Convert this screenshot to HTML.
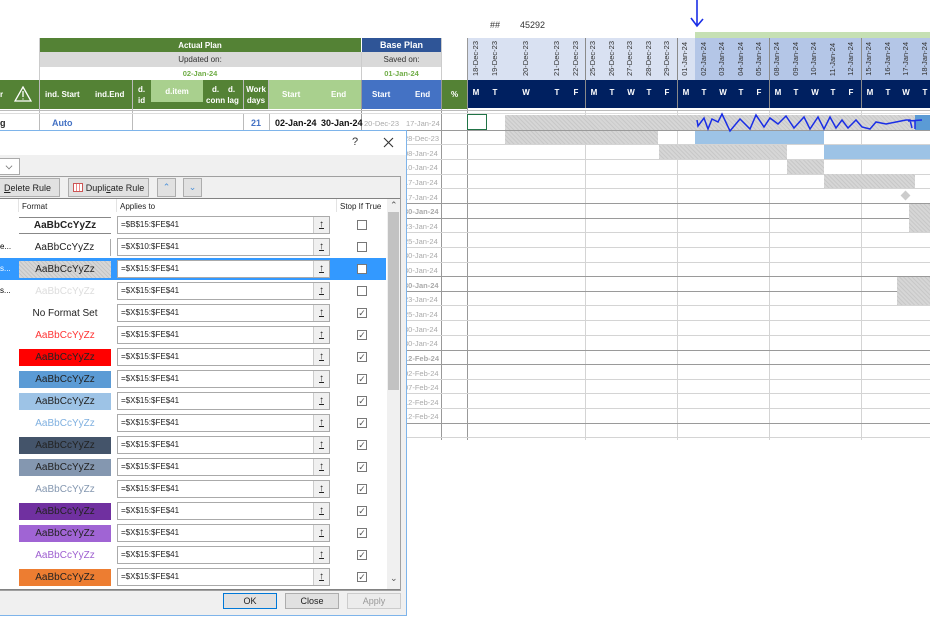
<!DOCTYPE html>
<html><head><meta charset="utf-8">
<style>
*{margin:0;padding:0;box-sizing:border-box}
body{width:930px;height:620px;overflow:hidden;background:#fff;font-family:"Liberation Sans",sans-serif;position:relative}
.a{position:absolute}
.c{display:flex;align-items:center;justify-content:center;text-align:center}
.hdr{color:#fff;font-weight:bold;font-size:8px}
.dt{position:absolute;top:40px;height:36px;width:10px;font-size:7.5px;color:#333}
.dt span{position:absolute;left:0;bottom:0;writing-mode:vertical-rl;transform:rotate(180deg);white-space:nowrap;line-height:10px}
.dy{position:absolute;top:88px;width:14px;margin-left:-7px;text-align:center;color:#fff;font-weight:bold;font-size:8px}
.hl{position:absolute;left:406px;width:524px;height:1px;background:#d4d4d4}
.hd{position:absolute;left:406px;width:524px;height:1px;background:#9a9a9a}
.vl{position:absolute;top:110px;height:330px;width:1px;background:#d4d4d4}
.hat{position:absolute;background-color:#d6d6d6;background-image:repeating-linear-gradient(45deg,#c8c8c8 0 1px,transparent 1px 3px)}
.rd{position:absolute;left:404px;width:37px;font-size:7.5px;color:#aaa;white-space:nowrap;overflow:hidden}
.rw{position:absolute;left:0;width:386px;height:22px}
.fm{position:absolute;left:19px;top:3px;width:92px;height:17px;font-size:10px;color:#222;display:flex;align-items:center;justify-content:center}
.ap{position:absolute;left:117px;top:2px;width:213px;height:18px;border:1px solid #aaa;background:#fff;font-size:8px;padding-left:3px;line-height:16px;color:#222}
.ap b{position:absolute;right:0;top:0;width:16px;height:16px;border-left:1px solid #ccc;background:#f0f0f0;font-size:10px;text-align:center;line-height:15px;text-decoration:underline}
.cb{position:absolute;left:357px;top:6px;width:10px;height:10px;border:1px solid #777;background:#fff;font-size:9px;line-height:8px;text-align:center;color:#555}
.btn{position:absolute;border:1px solid #adadad;background:#e1e1e1;font-size:9px;color:#222;display:flex;align-items:center;justify-content:center}
</style></head><body>

<div class="a" style="left:490px;top:20px;font-size:9px;color:#333">##</div>
<div class="a" style="left:520px;top:20px;font-size:9px;color:#333">45292</div>
<svg class="a" style="left:688px;top:0" width="20" height="30"><path d="M9 0 L9 26 M3 18 L9 26 L15 19" stroke="#1a2ee6" stroke-width="1.6" fill="none"/></svg>
<div class="a" style="left:695px;top:32px;width:235px;height:6px;background:#c6e0b4"></div>

<div class="a c hdr" style="left:39px;top:38px;width:322px;height:14px;background:#548235">Actual Plan</div>
<div class="a c hdr" style="left:362px;top:38px;width:79px;height:14px;background:#2f5597;font-size:9px">Base Plan</div>
<div class="a c" style="left:39px;top:52px;width:322px;height:15px;background:#d9d9d9;font-size:8px;color:#333">Updated on:</div>
<div class="a c" style="left:362px;top:52px;width:79px;height:15px;background:#d9d9d9;font-size:8px;color:#333">Saved on:</div>
<div class="a c" style="left:39px;top:67px;width:322px;height:13px;font-size:7.5px;color:#70ad47;font-weight:bold">02-Jan-24</div>
<div class="a c" style="left:362px;top:67px;width:79px;height:13px;font-size:7.5px;color:#70ad47;font-weight:bold">01-Jan-24</div>
<div class="a" style="left:39px;top:38px;width:1px;height:42px;background:#ccc"></div>
<div class="a" style="left:441px;top:38px;width:1px;height:42px;background:#ccc"></div>
<div class="a" style="left:361px;top:52px;width:1px;height:28px;background:#ccc"></div>

<div class="a" style="left:0;top:80px;width:467px;height:29px;background:#548235"></div>
<div class="a hdr" style="left:0;top:90px">r</div>
<svg class="a" style="left:14px;top:86px" width="18" height="16"><path d="M9 1 L17 15 L1 15 Z M9 5 L9 11 M9 12.5 L9 13.5" stroke="#fff" stroke-width="1.3" fill="none"/></svg>
<div class="a" style="left:39px;top:80px;width:1px;height:50px;background:#bbb"></div>
<div class="a hdr" style="left:45px;top:90px">ind. Start</div>
<div class="a hdr" style="left:95px;top:90px">ind.End</div>
<div class="a" style="left:132px;top:80px;width:1px;height:50px;background:#bbb"></div>
<div class="a hdr" style="left:138px;top:84px;line-height:11px">d.<br>id</div>
<div class="a c hdr" style="left:151px;top:80px;width:52px;height:22px;background:#a9d08e">d.item</div>
<div class="a hdr" style="left:206px;top:84px;line-height:11px;text-align:center">&nbsp;d.&nbsp;&nbsp;&nbsp;&nbsp;d.<br>conn lag</div>
<div class="a c hdr" style="left:243px;top:80px;width:26px;height:29px;line-height:11px;font-size:8px;border-left:1px solid #bbb;border-right:1px solid #bbb">Work<br>days</div>
<div class="a" style="left:269px;top:80px;width:92px;height:29px;background:#a9d08e"></div>
<div class="a hdr" style="left:282px;top:90px">Start</div>
<div class="a hdr" style="left:331px;top:90px">End</div>
<div class="a" style="left:362px;top:80px;width:79px;height:29px;background:#4472c4"></div>
<div class="a hdr" style="left:372px;top:90px">Start</div>
<div class="a hdr" style="left:415px;top:90px">End</div>
<div class="a hdr" style="left:451px;top:90px">%</div>
<div class="a" style="left:361px;top:80px;width:1px;height:50px;background:#999"></div>
<div class="a" style="left:441px;top:80px;width:1px;height:360px;background:#999"></div>

<div class="a" style="left:467px;top:38px;width:228px;height:42px;background:#d9e1f2"></div>
<div class="a" style="left:695px;top:38px;width:235px;height:42px;background:#b4c6e7"></div>
<div class="a" style="left:467px;top:80px;width:463px;height:28px;background:#002060"></div>
<div class="a" style="left:467px;top:38px;width:1px;height:402px;background:#999"></div>

<div class="dt" style="left:471px"><span>18-Dec-23</span></div>
<div class="dt" style="left:490px"><span>19-Dec-23</span></div>
<div class="dt" style="left:521px"><span>20-Dec-23</span></div>
<div class="dt" style="left:552px"><span>21-Dec-23</span></div>
<div class="dt" style="left:571px"><span>22-Dec-23</span></div>
<div class="dt" style="left:588px"><span>25-Dec-23</span></div>
<div class="dt" style="left:607px"><span>26-Dec-23</span></div>
<div class="dt" style="left:625px"><span>27-Dec-23</span></div>
<div class="dt" style="left:644px"><span>28-Dec-23</span></div>
<div class="dt" style="left:662px"><span>29-Dec-23</span></div>
<div class="dt" style="left:680px"><span>01-Jan-24</span></div>
<div class="dt" style="left:699px"><span>02-Jan-24</span></div>
<div class="dt" style="left:717px"><span>03-Jan-24</span></div>
<div class="dt" style="left:736px"><span>04-Jan-24</span></div>
<div class="dt" style="left:754px"><span>05-Jan-24</span></div>
<div class="dt" style="left:772px"><span>08-Jan-24</span></div>
<div class="dt" style="left:791px"><span>09-Jan-24</span></div>
<div class="dt" style="left:809px"><span>10-Jan-24</span></div>
<div class="dt" style="left:828px"><span>11-Jan-24</span></div>
<div class="dt" style="left:846px"><span>12-Jan-24</span></div>
<div class="dt" style="left:864px"><span>15-Jan-24</span></div>
<div class="dt" style="left:883px"><span>16-Jan-24</span></div>
<div class="dt" style="left:901px"><span>17-Jan-24</span></div>
<div class="dt" style="left:920px"><span>18-Jan-24</span></div>

<div class="dy" style="left:476px">M</div><div class="dy" style="left:495px">T</div><div class="dy" style="left:526px">W</div><div class="dy" style="left:557px">T</div><div class="dy" style="left:576px">F</div>
<div class="dy" style="left:594px">M</div><div class="dy" style="left:612px">T</div><div class="dy" style="left:631px">W</div><div class="dy" style="left:649px">T</div><div class="dy" style="left:667px">F</div>
<div class="dy" style="left:686px">M</div><div class="dy" style="left:704px">T</div><div class="dy" style="left:723px">W</div><div class="dy" style="left:741px">T</div><div class="dy" style="left:759px">F</div>
<div class="dy" style="left:778px">M</div><div class="dy" style="left:796px">T</div><div class="dy" style="left:815px">W</div><div class="dy" style="left:833px">T</div><div class="dy" style="left:851px">F</div>
<div class="dy" style="left:870px">M</div><div class="dy" style="left:888px">T</div><div class="dy" style="left:906px">W</div><div class="dy" style="left:925px">T</div>

<div class="a" style="left:585px;top:38px;width:1px;height:70px;background:#8a8a8a"></div>
<div class="a" style="left:677px;top:38px;width:1px;height:70px;background:#8a8a8a"></div>
<div class="a" style="left:769px;top:38px;width:1px;height:70px;background:#8a8a8a"></div>
<div class="a" style="left:861px;top:38px;width:1px;height:70px;background:#8a8a8a"></div>
<div class="vl" style="left:585px"></div><div class="vl" style="left:677px"></div><div class="vl" style="left:769px"></div><div class="vl" style="left:861px"></div>

<div class="a" style="left:0;top:110px;width:930px;height:1px;background:#bbb"></div>
<div class="a" style="left:0;top:113px;width:930px;height:1px;background:#ddd"></div>
<div class="hd" style="top:130px"></div>
<div class="hl" style="top:144px"></div><div class="hl" style="top:159px"></div><div class="hl" style="top:174px"></div>
<div class="hl" style="top:188px"></div><div class="hd" style="top:203px"></div><div class="hd" style="top:218px"></div>
<div class="hl" style="top:232px"></div><div class="hl" style="top:247px"></div><div class="hl" style="top:262px"></div>
<div class="hd" style="top:276px"></div><div class="hd" style="top:291px"></div><div class="hl" style="top:305px"></div>
<div class="hl" style="top:320px"></div><div class="hl" style="top:335px"></div><div class="hd" style="top:350px"></div>
<div class="hd" style="top:364px"></div><div class="hl" style="top:379px"></div><div class="hl" style="top:393px"></div>
<div class="hl" style="top:408px"></div><div class="hd" style="top:423px"></div><div class="hl" style="top:437px"></div>

<div class="a" style="left:0;top:118px;font-size:9px;font-weight:bold;color:#222">g</div>
<div class="a" style="left:52px;top:118px;font-size:9px;font-weight:bold;color:#4472c4">Auto</div>
<div class="a" style="left:243px;top:114px;width:1px;height:16px;background:#bbb"></div>
<div class="a" style="left:269px;top:114px;width:1px;height:16px;background:#bbb"></div>
<div class="a" style="left:251px;top:118px;font-size:9px;font-weight:bold;color:#4472c4">21</div>
<div class="a" style="left:275px;top:118px;font-size:9px;font-weight:bold;color:#111">02-Jan-24</div>
<div class="a" style="left:321px;top:118px;font-size:9px;font-weight:bold;color:#111">30-Jan-24</div>
<div class="a" style="left:364px;top:119px;font-size:7.5px;color:#aaa">20-Dec-23</div>
<div class="a" style="left:406px;top:119px;font-size:7.5px;color:#aaa">17-Jan-24</div>

<div class="rd" style="top:134px">28-Dec-23</div>
<div class="rd" style="top:149px">08-Jan-24</div>
<div class="rd" style="top:163px">10-Jan-24</div>
<div class="rd" style="top:178px">17-Jan-24</div>
<div class="rd" style="top:193px">17-Jan-24</div>
<div class="rd" style="top:207px;font-weight:bold">30-Jan-24</div>
<div class="rd" style="top:222px">23-Jan-24</div>
<div class="rd" style="top:237px">25-Jan-24</div>
<div class="rd" style="top:251px">30-Jan-24</div>
<div class="rd" style="top:266px">30-Jan-24</div>
<div class="rd" style="top:281px;font-weight:bold">30-Jan-24</div>
<div class="rd" style="top:295px">23-Jan-24</div>
<div class="rd" style="top:310px">25-Jan-24</div>
<div class="rd" style="top:325px">30-Jan-24</div>
<div class="rd" style="top:339px">30-Jan-24</div>
<div class="rd" style="top:354px;font-weight:bold">12-Feb-24</div>
<div class="rd" style="top:369px">02-Feb-24</div>
<div class="rd" style="top:383px">07-Feb-24</div>
<div class="rd" style="top:398px">12-Feb-24</div>
<div class="rd" style="top:412px">12-Feb-24</div>

<div class="hat" style="left:505px;top:115px;width:410px;height:15px"></div>
<div class="a" style="left:915px;top:115px;width:15px;height:15px;background:#5b9bd5"></div>
<div class="a" style="left:467px;top:114px;width:20px;height:16px;border:1.5px solid #217346"></div>
<div class="hat" style="left:505px;top:131px;width:153px;height:13px"></div>
<div class="a" style="left:695px;top:131px;width:129px;height:13px;background:#9dc3e6"></div>
<div class="hat" style="left:659px;top:145px;width:128px;height:14px"></div>
<div class="a" style="left:824px;top:145px;width:106px;height:14px;background:#9dc3e6"></div>
<div class="hat" style="left:787px;top:160px;width:37px;height:14px"></div>
<div class="hat" style="left:824px;top:174px;width:91px;height:14px"></div>
<div class="a" style="left:902px;top:192px;width:7px;height:7px;background:#ccc;transform:rotate(45deg)"></div>
<div class="hat" style="left:909px;top:204px;width:21px;height:28px"></div>
<div class="hat" style="left:897px;top:277px;width:33px;height:28px"></div>
<svg class="a" style="left:690px;top:108px" width="240" height="30"><path d="M7 12 L8 18 L14 10 L18 21 L22 11 L28 14 L32 6 L40 23 L50 11 L60 21 L66 7 L74 19 L80 10 L88 16 L96 8 L104 20 L114 9 L120 21 L128 9 L134 21 L140 9 L146 20 L152 12 L158 20 L166 12 L172 19 L180 21 L186 14 L196 16 L206 14 L216 12 L220 12 L222 20 M218 13 L232 12 M225 12 L225 21" stroke="#1a2ee6" stroke-width="1.5" fill="none"/></svg>

<!-- DIALOG -->
<div class="a" style="left:0;top:130px;width:407px;height:486px;background:#f0f0f0;border:1px solid #7eb4ea;border-left:none"></div>
<div class="a" style="left:0;top:131px;width:406px;height:24px;background:#fff"></div>
<div class="a" style="left:352px;top:136px;font-size:11px;color:#333">?</div>
<svg class="a" style="left:383px;top:137px" width="11" height="11"><path d="M1 1 L10 10 M10 1 L1 10" stroke="#333" stroke-width="1.1"/></svg>
<div class="a" style="left:0;top:158px;width:20px;height:17px;border:1px solid #aaa;border-left:none;background:#fff"></div>
<div class="a" style="left:6px;top:163px;width:6px;height:6px;border-right:1px solid #777;border-bottom:1px solid #777;transform:rotate(45deg) scale(.8)"></div>
<div class="a" style="left:0;top:176px;width:401px;height:415px;border:1px solid #a0a0a0;border-left:none"></div>
<div class="btn" style="left:-1px;top:178px;width:61px;height:19px;justify-content:flex-start;padding-left:4px"><u>D</u>elete Rule</div>
<div class="btn" style="left:68px;top:178px;width:81px;height:19px"><span style="display:inline-block;width:10px;height:9px;border:1px solid #c55;background:repeating-linear-gradient(90deg,#fff 0 2px,#e88 2px 3px);margin-right:3px"></span>Dupli<u>c</u>ate Rule</div>
<div class="btn" style="left:157px;top:178px;width:19px;height:19px;color:#4a90d9;font-size:9px">&#8963;</div>
<div class="btn" style="left:183px;top:178px;width:19px;height:19px;color:#4a90d9;font-size:9px">&#8964;</div>

<div class="a" style="left:0;top:198px;width:400px;height:392px;background:#fff;border:1px solid #828282;border-left:none"></div>
<div class="a" style="left:22px;top:202px;font-size:8px;color:#222">Format</div>
<div class="a" style="left:120px;top:202px;font-size:8px;color:#222">Applies to</div>
<div class="a" style="left:340px;top:202px;font-size:8px;color:#222">Stop If True</div>
<div class="a" style="left:18px;top:199px;width:1px;height:13px;background:#e3e3e3"></div>
<div class="a" style="left:116px;top:199px;width:1px;height:13px;background:#e3e3e3"></div>
<div class="a" style="left:336px;top:199px;width:1px;height:13px;background:#e3e3e3"></div>
<div class="a" style="left:387px;top:199px;width:13px;height:390px;background:#f0f0f0"></div>
<div class="a" style="left:388px;top:212px;width:11px;height:178px;background:#c2c2c2"></div>
<div class="a" style="left:390px;top:200px;font-size:9px;color:#555">&#8963;</div>
<div class="a" style="left:390px;top:573px;font-size:9px;color:#555">&#8964;</div>

<div class="rw" style="top:214px"><div class="fm" style="font-weight:bold;border-top:1px solid #888;border-bottom:1px solid #888">AaBbCcYyZz</div><div class="ap">=$B$15:$FE$41<b>&#8593;</b></div><div class="cb"></div></div>
<div class="rw" style="top:236px"><span class="a" style="left:0;top:6px;font-size:8px">e...</span><div class="fm" style="border-right:1px solid #aaa">AaBbCcYyZz</div><div class="ap">=$X$10:$FE$41<b>&#8593;</b></div><div class="cb"></div></div>
<div class="rw" style="top:258px;background:#3399ff"><span class="a" style="left:0;top:6px;font-size:8px;color:#fff">s...</span><div class="fm" style="background-color:#d6d6d6;background-image:repeating-linear-gradient(45deg,#c4c4c4 0 1px,transparent 1px 3px)">AaBbCcYyZz</div><div class="ap">=$X$15:$FE$41<b>&#8593;</b></div><div class="cb"></div></div>
<div class="rw" style="top:280px"><span class="a" style="left:0;top:6px;font-size:8px">s...</span><div class="fm" style="color:#ddd">AaBbCcYyZz</div><div class="ap">=$X$15:$FE$41<b>&#8593;</b></div><div class="cb"></div></div>
<div class="rw" style="top:302px"><div class="fm">No Format Set</div><div class="ap">=$X$15:$FE$41<b>&#8593;</b></div><div class="cb">&#10003;</div></div>
<div class="rw" style="top:324px"><div class="fm" style="color:#ff3333">AaBbCcYyZz</div><div class="ap">=$X$15:$FE$41<b>&#8593;</b></div><div class="cb">&#10003;</div></div>
<div class="rw" style="top:346px"><div class="fm" style="background:#ff0000">AaBbCcYyZz</div><div class="ap">=$X$15:$FE$41<b>&#8593;</b></div><div class="cb">&#10003;</div></div>
<div class="rw" style="top:368px"><div class="fm" style="background:#5b9bd5">AaBbCcYyZz</div><div class="ap">=$X$15:$FE$41<b>&#8593;</b></div><div class="cb">&#10003;</div></div>
<div class="rw" style="top:390px"><div class="fm" style="background:#9dc3e6">AaBbCcYyZz</div><div class="ap">=$X$15:$FE$41<b>&#8593;</b></div><div class="cb">&#10003;</div></div>
<div class="rw" style="top:412px"><div class="fm" style="color:#7fb0e0">AaBbCcYyZz</div><div class="ap">=$X$15:$FE$41<b>&#8593;</b></div><div class="cb">&#10003;</div></div>
<div class="rw" style="top:434px"><div class="fm" style="background:#44546a">AaBbCcYyZz</div><div class="ap">=$X$15:$FE$41<b>&#8593;</b></div><div class="cb">&#10003;</div></div>
<div class="rw" style="top:456px"><div class="fm" style="background:#8497b0">AaBbCcYyZz</div><div class="ap">=$X$15:$FE$41<b>&#8593;</b></div><div class="cb">&#10003;</div></div>
<div class="rw" style="top:478px"><div class="fm" style="color:#8497b0">AaBbCcYyZz</div><div class="ap">=$X$15:$FE$41<b>&#8593;</b></div><div class="cb">&#10003;</div></div>
<div class="rw" style="top:500px"><div class="fm" style="background:#7030a0">AaBbCcYyZz</div><div class="ap">=$X$15:$FE$41<b>&#8593;</b></div><div class="cb">&#10003;</div></div>
<div class="rw" style="top:522px"><div class="fm" style="background:#a064d4">AaBbCcYyZz</div><div class="ap">=$X$15:$FE$41<b>&#8593;</b></div><div class="cb">&#10003;</div></div>
<div class="rw" style="top:544px"><div class="fm" style="color:#9e5fd0">AaBbCcYyZz</div><div class="ap">=$X$15:$FE$41<b>&#8593;</b></div><div class="cb">&#10003;</div></div>
<div class="rw" style="top:566px"><div class="fm" style="background:#ed7d31">AaBbCcYyZz</div><div class="ap">=$X$15:$FE$41<b>&#8593;</b></div><div class="cb">&#10003;</div></div>

<div class="btn" style="left:223px;top:593px;width:54px;height:16px;border:1.5px solid #0078d7">OK</div>
<div class="btn" style="left:285px;top:593px;width:54px;height:16px">Close</div>
<div class="btn" style="left:347px;top:593px;width:54px;height:16px;color:#999;background:#ececec;border-color:#ccc">Apply</div>

</body></html>
